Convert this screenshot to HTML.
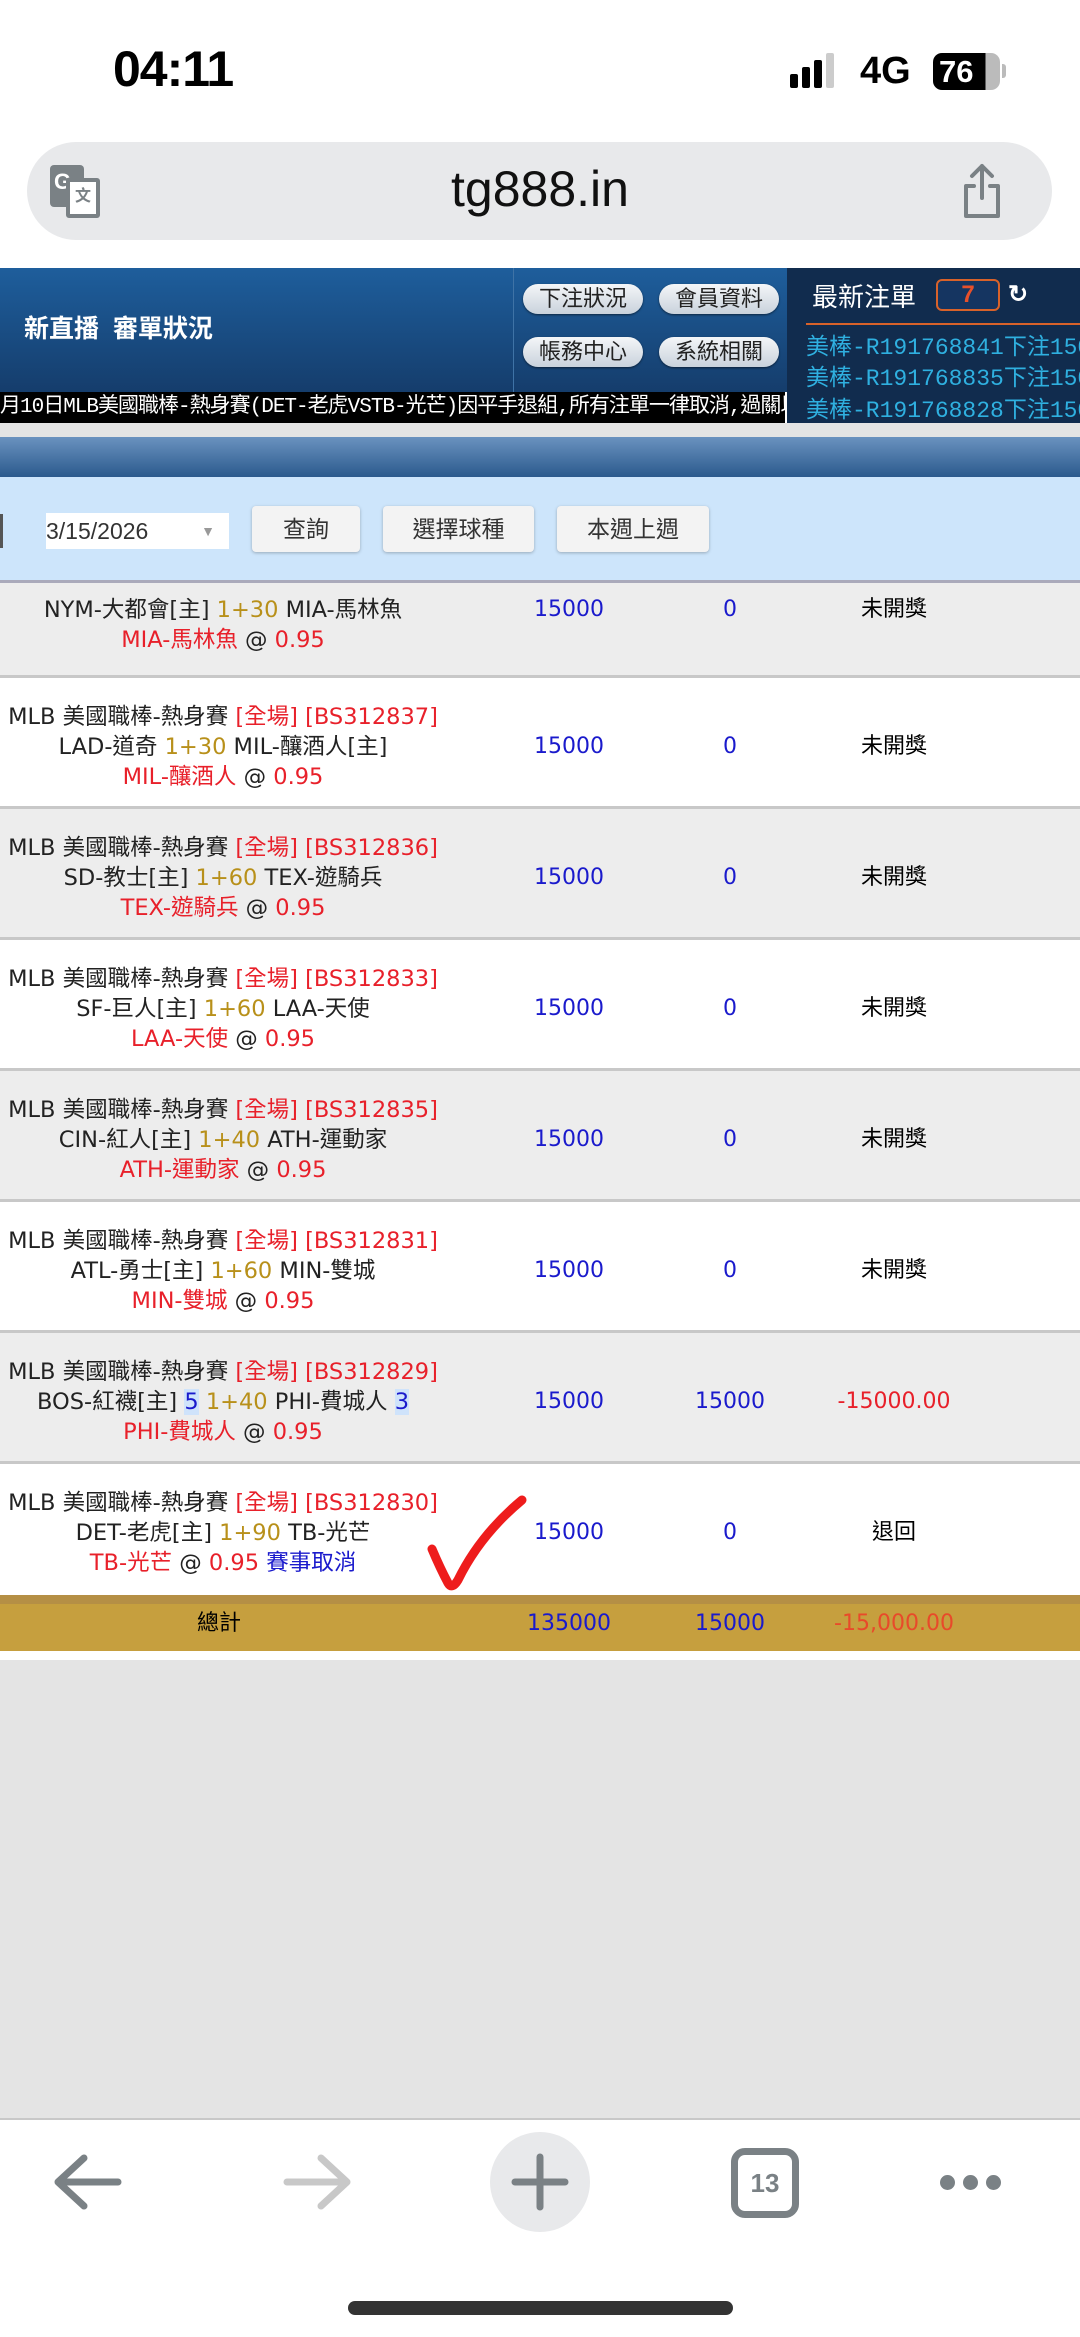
<!DOCTYPE html>
<html><head><meta charset="utf-8"><style>
*{margin:0;padding:0;box-sizing:border-box}
body{width:1080px;height:2337px;position:relative;overflow:hidden;background:#fff;font-family:"Liberation Sans","Noto Sans CJK TC",sans-serif}
.a{position:absolute}
.row{position:absolute;left:0;width:1080px;height:131px;border-bottom:3px solid #c8c8c8}
.g{background:#ededed}.w{background:#fff}
.l{position:absolute;left:0;width:446px;text-align:center;font-family:"DejaVu Sans","Noto Sans CJK TC",sans-serif;font-size:22.5px;color:#222;white-space:nowrap;line-height:30px}
.c{position:absolute;text-align:center;font-family:"DejaVu Sans","Noto Sans CJK TC",sans-serif;font-size:22px;line-height:30px;top:54px;white-space:nowrap}
.r{color:#e8202a}.y{color:#b8901a}.b{color:#1a1acc}
.nb{position:absolute;width:120px;height:30px;border-radius:15px;background:linear-gradient(#f4f6f8,#c9d2dc);color:#222;font-size:22px;text-align:center;line-height:30px;box-shadow:0 1px 2px #0008}
.fb{position:absolute;top:506px;height:46px;background:#f3f3f3;border-radius:4px;box-shadow:0 1px 3px #0004;font-size:23px;color:#333;text-align:center;line-height:46px}
.tk{position:absolute;left:806px;color:#2fb0e0;font-family:"Liberation Mono","Noto Sans CJK TC",monospace;font-size:23px;white-space:nowrap}
</style></head><body>
<!-- status -->
<div class="a" style="left:113px;top:40px;font-size:50px;font-weight:bold;letter-spacing:-1px">04:11</div>
<div class="a" style="left:790px;top:74px;width:8px;height:14px;background:#000;border-radius:2px"></div>
<div class="a" style="left:802px;top:67px;width:8px;height:21px;background:#000;border-radius:2px"></div>
<div class="a" style="left:814px;top:60px;width:8px;height:28px;background:#000;border-radius:2px"></div>
<div class="a" style="left:826px;top:53px;width:8px;height:35px;background:#ccc;border-radius:2px"></div>
<div class="a" style="left:860px;top:50px;font-size:38px;font-weight:bold">4G</div>
<div class="a" style="left:933px;top:53px;width:67px;height:37px;border-radius:9px;background:linear-gradient(90deg,#000 78%,#bbb 78%);color:#fff;font-weight:bold;font-size:31px;line-height:37px;padding-left:6px">76</div>
<div class="a" style="left:1002px;top:64px;width:4px;height:14px;background:#bbb;border-radius:0 3px 3px 0"></div>
<!-- url bar -->
<div class="a" style="left:27px;top:142px;width:1025px;height:98px;border-radius:49px;background:#e8e9eb"></div>
<div class="a" style="left:50px;top:165px;width:34px;height:42px;background:#7a8185;border-radius:4px;color:#fff;font-weight:bold;font-size:22px;padding:4px 0 0 4px">G</div>
<div class="a" style="left:66px;top:178px;width:34px;height:40px;background:#fff;border:4px solid #7a8185;border-radius:3px;color:#7a8185;font-size:16px;text-align:center;font-weight:bold">文</div>
<div class="a" style="left:0;top:160px;width:1080px;text-align:center;font-size:50px;color:#111">tg888.in</div>
<svg class="a" style="left:960px;top:162px" width="44" height="60"><path d="M22 4V36M12 14L22 4L32 14M14 24H6V54H38V24H30" fill="none" stroke="#7a8185" stroke-width="4" stroke-linecap="round" stroke-linejoin="round"/></svg>
<!-- header -->
<div class="a" style="left:0;top:268px;width:787px;height:124px;background:linear-gradient(#1e5e9c,#153d6c)"></div>
<div class="a" style="left:513px;top:268px;width:1px;height:124px;background:#3f73a6"></div>
<div class="a" style="left:24px;top:309px;color:#fff;font-size:25px;font-weight:bold">新直播 &nbsp;審單狀況</div>
<div class="nb" style="left:523px;top:284px">下注狀況</div>
<div class="nb" style="left:659px;top:284px">會員資料</div>
<div class="nb" style="left:523px;top:337px">帳務中心</div>
<div class="nb" style="left:659px;top:337px">系統相關</div>
<div class="a" style="left:787px;top:268px;width:293px;height:155px;background:#112c4e"></div>
<div class="a" style="left:812px;top:277px;color:#fff;font-size:26px">最新注單</div>
<div class="a" style="left:936px;top:279px;width:64px;height:32px;border:2px solid #d8622a;border-radius:6px;background:#153561;color:#e8502a;font-weight:bold;font-size:24px;text-align:center;line-height:28px">7</div>
<div class="a" style="left:1008px;top:280px;color:#fff;font-size:24px;font-weight:bold">↻</div>
<div class="a" style="left:806px;top:323px;width:274px;height:2px;background:#d8622a"></div>
<div class="tk" style="top:327px">美棒-R191768841下注150</div>
<div class="tk" style="top:358px">美棒-R191768835下注150</div>
<div class="tk" style="top:390px">美棒-R191768828下注150</div>
<div class="a" style="left:0;top:392px;width:785px;height:31px;background:#000;color:#fff;font-size:21px;line-height:31px;white-space:nowrap;overflow:hidden;font-family:'Liberation Mono','Noto Sans CJK TC',monospace;letter-spacing:-1px">月10日MLB美國職棒-熱身賽(DET-老虎VSTB-光芒)因平手退組,所有注單一律取消,過關以</div>
<div class="a" style="left:0;top:423px;width:1080px;height:14px;background:#e4e4e4"></div>
<div class="a" style="left:0;top:437px;width:1080px;height:40px;background:linear-gradient(#6a92bf,#2b5a8d)"></div>
<div class="a" style="left:0;top:477px;width:1080px;height:106px;background:#cde5fb;border-bottom:3px solid #aab"></div>
<div class="a" style="left:0;top:514px;width:3px;height:34px;background:#555"></div>
<div class="a" style="left:46px;top:513px;width:183px;height:36px;background:#fff;font-size:23px;color:#333;line-height:36px">3/15/2026<span style="position:absolute;right:14px;color:#999;font-size:14px">▼</span></div>
<div class="fb" style="left:252px;width:108px">查詢</div>
<div class="fb" style="left:383px;width:151px">選擇球種</div>
<div class="fb" style="left:557px;width:152px">本週上週</div>

<!-- rows -->
<div class="row g" style="top:583px;height:95px">
<div class="l" style="top:12px">NYM-大都會[主] <span class="y">1+30</span> MIA-馬林魚</div>
<div class="l" style="top:42px"><span class="r">MIA-馬林魚</span> @ <span class="r">0.95</span></div>
<div class="c b" style="left:519px;width:100px;top:12px">15000</div><div class="c b" style="left:680px;width:100px;top:12px">0</div><div class="c" style="left:834px;width:120px;top:12px">未開獎</div>
</div>
<div class="row w" style="top:678px"><div class="l" style="top:24px">MLB 美國職棒-熱身賽 <span class="r">[全場] [BS312837]</span></div><div class="l" style="top:54px">LAD-道奇 <span class="y">1+30</span> MIL-釀酒人[主]</div><div class="l" style="top:84px"><span class="r">MIL-釀酒人</span> @ <span class="r">0.95</span></div><div class="c b" style="left:519px;width:100px">15000</div><div class="c b" style="left:680px;width:100px">0</div><div class="c" style="left:834px;width:120px">未開獎</div></div>
<div class="row g" style="top:809px"><div class="l" style="top:24px">MLB 美國職棒-熱身賽 <span class="r">[全場] [BS312836]</span></div><div class="l" style="top:54px">SD-教士[主] <span class="y">1+60</span> TEX-遊騎兵</div><div class="l" style="top:84px"><span class="r">TEX-遊騎兵</span> @ <span class="r">0.95</span></div><div class="c b" style="left:519px;width:100px">15000</div><div class="c b" style="left:680px;width:100px">0</div><div class="c" style="left:834px;width:120px">未開獎</div></div>
<div class="row w" style="top:940px"><div class="l" style="top:24px">MLB 美國職棒-熱身賽 <span class="r">[全場] [BS312833]</span></div><div class="l" style="top:54px">SF-巨人[主] <span class="y">1+60</span> LAA-天使</div><div class="l" style="top:84px"><span class="r">LAA-天使</span> @ <span class="r">0.95</span></div><div class="c b" style="left:519px;width:100px">15000</div><div class="c b" style="left:680px;width:100px">0</div><div class="c" style="left:834px;width:120px">未開獎</div></div>
<div class="row g" style="top:1071px"><div class="l" style="top:24px">MLB 美國職棒-熱身賽 <span class="r">[全場] [BS312835]</span></div><div class="l" style="top:54px">CIN-紅人[主] <span class="y">1+40</span> ATH-運動家</div><div class="l" style="top:84px"><span class="r">ATH-運動家</span> @ <span class="r">0.95</span></div><div class="c b" style="left:519px;width:100px">15000</div><div class="c b" style="left:680px;width:100px">0</div><div class="c" style="left:834px;width:120px">未開獎</div></div>
<div class="row w" style="top:1202px"><div class="l" style="top:24px">MLB 美國職棒-熱身賽 <span class="r">[全場] [BS312831]</span></div><div class="l" style="top:54px">ATL-勇士[主] <span class="y">1+60</span> MIN-雙城</div><div class="l" style="top:84px"><span class="r">MIN-雙城</span> @ <span class="r">0.95</span></div><div class="c b" style="left:519px;width:100px">15000</div><div class="c b" style="left:680px;width:100px">0</div><div class="c" style="left:834px;width:120px">未開獎</div></div>
<div class="row g" style="top:1333px"><div class="l" style="top:24px">MLB 美國職棒-熱身賽 <span class="r">[全場] [BS312829]</span></div><div class="l" style="top:54px">BOS-紅襪[主] <span class="b" style="background:#cfe3fb">5</span> <span class="y">1+40</span> PHI-費城人 <span class="b" style="background:#cfe3fb">3</span></div><div class="l" style="top:84px"><span class="r">PHI-費城人</span> @ <span class="r">0.95</span></div><div class="c b" style="left:519px;width:100px">15000</div><div class="c b" style="left:680px;width:100px">15000</div><div class="c r" style="left:814px;width:160px">-15000.00</div></div>
<div class="row w" style="top:1464px;border-bottom:none"><div class="l" style="top:24px">MLB 美國職棒-熱身賽 <span class="r">[全場] [BS312830]</span></div><div class="l" style="top:54px">DET-老虎[主] <span class="y">1+90</span> TB-光芒</div><div class="l" style="top:84px"><span class="r">TB-光芒</span> @ <span class="r">0.95</span> <span class="b">賽事取消</span></div><div class="c b" style="left:519px;width:100px">15000</div><div class="c b" style="left:680px;width:100px">0</div><div class="c" style="left:834px;width:120px">退回</div></div>
<svg class="a" style="left:0;top:1480px" width="600" height="120"><path d="M432 69Q440 88 448 103Q452 110 458 100Q480 55 522 20" fill="none" stroke="#ee1c1c" stroke-width="9" stroke-linecap="round" stroke-linejoin="round"/></svg>
<!-- total -->
<div class="a" style="left:0;top:1595px;width:1080px;height:56px;background:#c69f3e;border-top:9px solid #b58f45"></div>
<div class="c" style="left:159px;width:120px;top:1609px">總計</div>
<div class="c b" style="left:509px;width:120px;top:1609px">135000</div>
<div class="c b" style="left:680px;width:100px;top:1609px">15000</div>
<div class="c" style="left:814px;width:160px;top:1609px;color:#e84a2a">-15,000.00</div>
<div class="a" style="left:0;top:1660px;width:1080px;height:460px;background:#e4e4e4;border-bottom:2px solid #c8c8c8"></div>
<!-- toolbar -->
<svg class="a" style="left:50px;top:2150px" width="80" height="70"><path d="M34 8L8 32L34 56M8 32H68" fill="none" stroke="#7a8185" stroke-width="7" stroke-linecap="round" stroke-linejoin="round"/></svg>
<svg class="a" style="left:275px;top:2150px" width="80" height="70"><path d="M46 8L72 32L46 56M72 32H12" fill="none" stroke="#c8c8c8" stroke-width="7" stroke-linecap="round" stroke-linejoin="round"/></svg>
<div class="a" style="left:490px;top:2132px;width:100px;height:100px;border-radius:50%;background:#e8e9eb"></div>
<svg class="a" style="left:510px;top:2152px" width="60" height="60"><path d="M30 5V55M5 30H55" stroke="#7a8185" stroke-width="7" stroke-linecap="round"/></svg>
<div class="a" style="left:731px;top:2148px;width:68px;height:70px;border:7px solid #7a8185;border-radius:14px;color:#7a8185;font-weight:bold;font-size:26px;text-align:center;line-height:56px">13</div>
<div class="a" style="left:940px;top:2175px;width:15px;height:15px;border-radius:50%;background:#7a8185"></div>
<div class="a" style="left:963px;top:2175px;width:15px;height:15px;border-radius:50%;background:#7a8185"></div>
<div class="a" style="left:986px;top:2175px;width:15px;height:15px;border-radius:50%;background:#7a8185"></div>
<div class="a" style="left:348px;top:2301px;width:385px;height:14px;border-radius:7px;background:#333"></div>
</body></html>
